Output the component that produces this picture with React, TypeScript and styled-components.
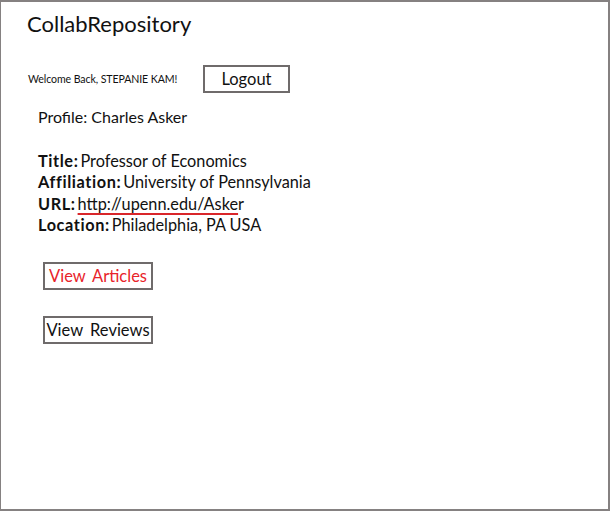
import React from 'react';
import styled, { createGlobalStyle } from 'styled-components';

const GlobalStyle = createGlobalStyle`
  html, body {
    margin: 0;
    padding: 0;
    background: #ffffff;
  }
  body {
    font-family: Lato, "Open Sans", sans-serif;
    color: #111111;
  }
`;

const Frame = styled.div`
  box-sizing: border-box;
  width: 610px;
  height: 511px;
  border-style: solid;
  border-color: #858181;
  border-width: 2px 2px 2px 1px;
  display: flex;
  flex-direction: column;
  padding: 8px 0 0 26px;
`;

const Brand = styled.h1`
  margin: 0;
  font-size: 22px;
  font-weight: 400;
  line-height: 28px;
`;

const WelcomeRow = styled.div`
  display: flex;
  align-items: center;
  margin-top: 27px;
  padding-left: 1px;
`;

const Welcome = styled.span`
  font-size: 10.6px;
  letter-spacing: -0.1px;
  width: 175px;
`;

const BoxButton = styled.button<{ $accent?: boolean; $width: number }>`
  box-sizing: border-box;
  width: ${(p) => p.$width}px;
  height: 28px;
  border: 2px solid #6f6b6b;
  background: #ffffff;
  padding: 0;
  font-family: Lato, "Open Sans", sans-serif;
  font-size: 16.5px;
  word-spacing: 3px;
  white-space: nowrap;
  color: ${(p) => (p.$accent ? '#e8232a' : '#111111')};
  cursor: pointer;
`;

const Profile = styled.div`
  margin: 13px 0 0 11px;
  font-size: 16px;
  line-height: 22px;
`;

const Details = styled.dl`
  margin: 22px 0 0 11px;
  font-size: 16.3px;
  line-height: 21.4px;
`;

const Line = styled.div`
  display: flex;
  gap: 2px;
`;

const Term = styled.dt`
  font-weight: 700;
  letter-spacing: 0.6px;
`;

const Value = styled.dd`
  margin: 0;
`;

const UrlMark = styled.span`
  text-decoration: underline;
  text-decoration-color: #d9262a;
  text-decoration-thickness: 2px;
  text-underline-offset: 3px;
`;

const Actions = styled.div`
  display: flex;
  flex-direction: column;
  gap: 26px;
  margin: 26px 0 0 16px;
`;

const App = () => {
  return (
    <>
      <GlobalStyle />
      <Frame>
        <Brand>CollabRepository</Brand>
        <WelcomeRow>
          <Welcome>Welcome Back, STEPANIE KAM!</Welcome>
          <BoxButton $width={87}>Logout</BoxButton>
        </WelcomeRow>
        <Profile>Profile: Charles Asker</Profile>
        <Details>
          <Line>
            <Term>Title:</Term>
            <Value>Professor of Economics</Value>
          </Line>
          <Line>
            <Term>Affiliation:</Term>
            <Value>University of Pennsylvania</Value>
          </Line>
          <Line>
            <Term>URL:</Term>
            <Value>
              <UrlMark> http://upenn.edu/Aske</UrlMark>r
            </Value>
          </Line>
          <Line>
            <Term>Location:</Term>
            <Value>Philadelphia, PA USA</Value>
          </Line>
        </Details>
        <Actions>
          <BoxButton $width={110} $accent>View Articles</BoxButton>
          <BoxButton $width={110}>View Reviews</BoxButton>
        </Actions>
      </Frame>
    </>
  );
};

export default App;
